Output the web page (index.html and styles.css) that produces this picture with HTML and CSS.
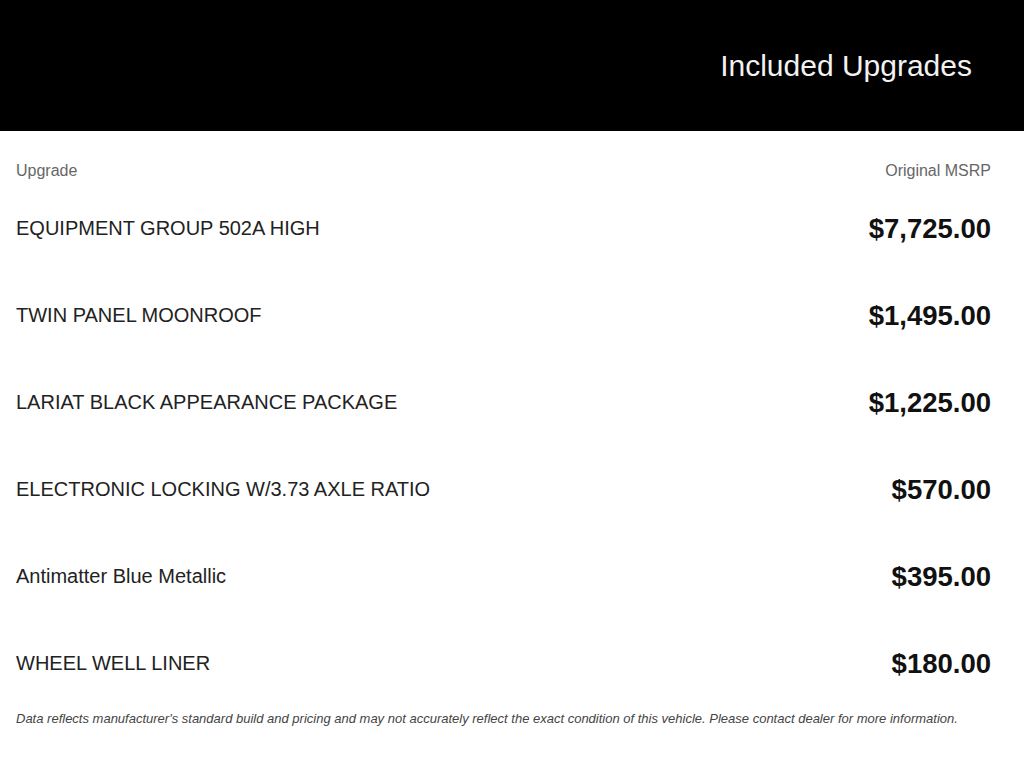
FILE: index.html
```html
<!DOCTYPE html>
<html lang="en">
<head>
<meta charset="utf-8">
<title>Included Upgrades</title>
<link rel="stylesheet" href="styles.css">
</head>
<body>
<header class="banner">
  <h1 class="banner-title">Included Upgrades</h1>
</header>
<main class="upgrades">
  <div class="cols">
    <span>Upgrade</span>
    <span>Original MSRP</span>
  </div>
  <div class="row"><span class="name">EQUIPMENT GROUP 502A HIGH</span><span class="price">$7,725.00</span></div>
  <div class="row"><span class="name">TWIN PANEL MOONROOF</span><span class="price">$1,495.00</span></div>
  <div class="row"><span class="name">LARIAT BLACK APPEARANCE PACKAGE</span><span class="price">$1,225.00</span></div>
  <div class="row"><span class="name">ELECTRONIC LOCKING W/3.73 AXLE RATIO</span><span class="price">$570.00</span></div>
  <div class="row"><span class="name">Antimatter Blue Metallic</span><span class="price">$395.00</span></div>
  <div class="row"><span class="name">WHEEL WELL LINER</span><span class="price">$180.00</span></div>
  <p class="note">Data reflects manufacturer's standard build and pricing and may not accurately reflect the exact condition of this vehicle. Please contact dealer for more information.</p>
</main>
</body>
</html>
```
FILE: styles.css
```css
html, body {
  margin: 0;
  padding: 0;
  background: #fff;
  font-family: "Liberation Sans", Arial, sans-serif;
}
.banner {
  height: 131px;
  background: #000;
  display: flex;
  align-items: center;
  justify-content: flex-end;
  padding-right: 52px;
  box-sizing: border-box;
}
.banner-title {
  margin: 0;
  color: #f2f2f2;
  font-weight: normal;
  font-size: 30px;
  line-height: 34px;
}
.upgrades {
  padding: 0 33px 0 16px;
}
.cols {
  display: flex;
  justify-content: space-between;
  padding: 31px 0 5px;
  font-size: 16px;
  line-height: 18px;
  color: #666;
}
.row {
  height: 87px;
  display: flex;
  justify-content: space-between;
  align-items: center;
}
.name {
  font-size: 20px;
  color: #222;
}
.price {
  font-size: 27.5px;
  font-weight: bold;
  color: #111;
}
.note {
  margin: 5px 0 0;
  font-size: 13px;
  line-height: 14px;
  font-style: italic;
  color: #444;
  white-space: nowrap;
}
```
